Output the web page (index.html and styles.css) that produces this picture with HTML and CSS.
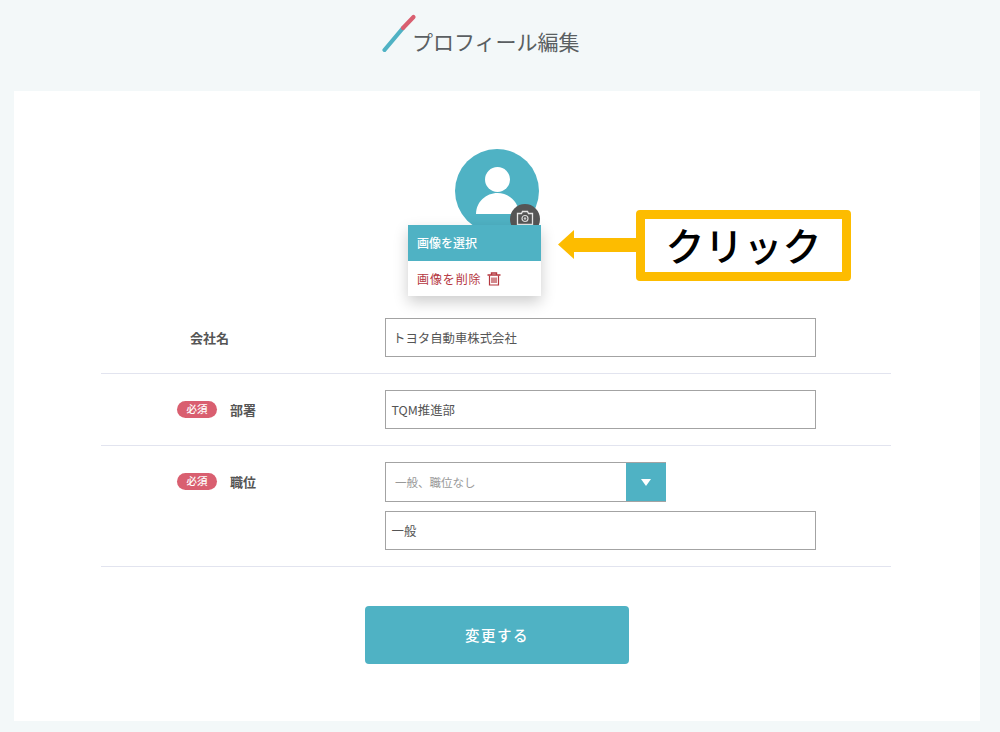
FILE: index.html
```html
<!DOCTYPE html>
<html lang="ja">
<head>
    <meta charset="UTF-8">
    <title>プロフィール編集</title>
    <link rel="stylesheet" href="styles.css">
</head>
<body>

<header class="page-header">
    <svg class="title-pen" width="36" height="38" viewBox="0 0 36 38">
        <path d="M2.500 36 L21 14" stroke="#4fb2c4" stroke-width="4.200" stroke-linecap="round"/>
        <path d="M21 14 L31.500 3" stroke="#d95f70" stroke-width="4.200" stroke-linecap="round"/>
    </svg>
    <h1>プロフィール編集</h1>
</header>

<main class="card">
    <div class="avatar-area">
        <div class="avatar">
            <svg width="84" height="84" viewBox="0 0 84 84">
                <circle cx="42" cy="42" r="42" fill="#4fb2c4"/>
                <circle cx="42.500" cy="30.500" r="12.500" fill="#fff"/>
                <path d="M21 65 C21 53 31 44 42.500 44 C54 44 64 53 64 65 Z" fill="#fff"/>
            </svg>
            <div class="camera">
                <svg width="18" height="16" viewBox="0 0 18 16">
                    <path d="M1.500 3.500 H5.500 L6.500 1.500 H11.500 L12.500 3.500 H16.500 V14.500 H1.500 Z" fill="none" stroke="#e8e8e8" stroke-width="1.300"/>
                    <circle cx="9" cy="8.500" r="3" fill="none" stroke="#ddd" stroke-width="1.200"/>
                    <circle cx="9" cy="8.500" r="1.200" fill="#ccc"/>
                </svg>
            </div>
        </div>

        <div class="photo-menu">
            <div class="menu-select">画像を選択</div>
            <div class="menu-delete">
                画像を削除
                <svg width="14" height="14" viewBox="0 0 14 14">
                    <path d="M0.500 3 H13.500 M4.500 2.500 V1 H9.500 V2.500" fill="none" stroke="#b5373f" stroke-width="1.400"/>
                    <path d="M2.500 3.500 V13 H11.500 V3.500 M5 5.500 V11 M7 5.500 V11 M9 5.500 V11" fill="none" stroke="#b5373f" stroke-width="1.200"/>
                </svg>
            </div>
        </div>

        <!-- Annotation on top of the screenshot -->
        <svg class="callout-arrow" width="80" height="29" viewBox="0 0 80 29">
            <path d="M0 14.500 L16 0 V8 H80 V22 H16 V29 Z" fill="#fdbc00"/>
        </svg>
        <div class="callout-box">クリック</div>
    </div>

    <div class="form">
        <div class="form-row">
            <div class="form-label no-badge">会社名</div>
            <div class="form-fields">
                <div class="field">トヨタ自動車株式会社</div>
            </div>
        </div>
        <div class="form-row">
            <div class="form-label"><span class="badge">必須</span>部署</div>
            <div class="form-fields">
                <div class="field tight">TQM推進部</div>
            </div>
        </div>
        <div class="form-row">
            <div class="form-label"><span class="badge">必須</span>職位</div>
            <div class="form-fields">
                <div class="select-box">
                    <span class="select-value">一般、職位なし</span>
                    <span class="select-btn"></span>
                </div>
                <div class="field tight">一般</div>
            </div>
        </div>
    </div>

    <button class="submit-btn">変更する</button>
</main>

</body>
</html>
```

FILE: styles.css
```css
body {
    font-family: 'Noto Sans CJK JP', 'Noto Sans', sans-serif;
    background-color: #f3f8f9;
    color: #555;
    margin: 0;
    padding: 0;
    height: 732px;
    overflow: hidden;
}

.page-header {
    height: 91px;
    position: relative;
    box-sizing: border-box;
    padding: 26px 0 0 412px;
}

.page-header h1 {
    margin: 0;
    font-size: 21px;
    font-weight: 400;
    line-height: 30px;
    color: #5a5f62;
}

.title-pen {
    position: absolute;
    left: 382px;
    top: 14px;
}

.card {
    margin: 0 20px 0 14px;
    background-color: #fff;
    padding: 58px 0 57px;
    display: flex;
    flex-direction: column;
    align-items: center;
}

.avatar-area {
    position: relative;
    width: 84px;
    height: 84px;
    margin-bottom: 69px;
}

.avatar {
    width: 84px;
    height: 84px;
    position: relative;
}

.avatar svg {
    display: block;
}

.camera {
    position: absolute;
    left: 55px;
    top: 55px;
    width: 30px;
    height: 30px;
    border-radius: 50%;
    background-color: #555;
    display: flex;
    justify-content: center;
    padding-top: 6px;
    box-sizing: border-box;
}

.photo-menu {
    position: absolute;
    left: -47px;
    top: 76px;
    width: 133px;
    background-color: #fff;
    box-shadow: 0 6px 14px rgba(0, 0, 0, 0.2);
    font-size: 12px;
}

.menu-select {
    height: 36px;
    line-height: 36px;
    padding-left: 9px;
    background-color: #4fb2c4;
    color: #fff;
    font-weight: 500;
}

.menu-delete {
    height: 35px;
    padding-left: 9px;
    display: flex;
    align-items: center;
    gap: 5px;
    color: #b5373f;
    letter-spacing: 0.9px;
}

.callout-arrow {
    position: absolute;
    left: 103px;
    top: 81px;
}

.callout-box {
    position: absolute;
    left: 181px;
    top: 61px;
    width: 215px;
    height: 71px;
    box-sizing: border-box;
    border: 9.500px solid #fdbc00;
    border-radius: 4px;
    background-color: #fff;
    color: #000;
    font-size: 39px;
    font-weight: 500;
    line-height: 51px;
    text-align: center;
}

.form {
    width: 790px;
    transform: translateX(-1px);
}

.form-row {
    display: flex;
    padding: 16px 0;
    border-bottom: 1px solid #e2e4ef;
}

.form-label {
    width: 284px;
    box-sizing: border-box;
    padding-left: 76px;
    height: 39px;
    display: flex;
    align-items: center;
    font-size: 13px;
    font-weight: 700;
    color: #555;
}

.form-label.no-badge {
    padding-left: 89px;
}

.badge {
    width: 40px;
    height: 17px;
    line-height: 16px;
    border-radius: 9px;
    margin-right: 13px;
    background-color: #d95f70;
    color: #fff;
    font-size: 10.500px;
    font-weight: 500;
    text-align: center;
}

.form-fields {
    display: flex;
    flex-direction: column;
    gap: 9px;
}

.field {
    width: 431px;
    height: 39px;
    box-sizing: border-box;
    border: 1px solid #a3a3a3;
    padding-left: 7px;
    font-size: 12.400px;
    line-height: 39px;
    color: #555;
}

.field.tight {
    padding-left: 5.500px;
}

.select-box {
    width: 281px;
    height: 40px;
    box-sizing: border-box;
    border: 1px solid #a3a3a3;
    border-right: none;
    display: flex;
    justify-content: space-between;
}

.select-value {
    padding-left: 9px;
    font-size: 11.500px;
    line-height: 38px;
    color: #999;
}

.select-btn {
    width: 40px;
    background-color: #4fb2c4;
    position: relative;
}

.select-btn::after {
    content: "";
    position: absolute;
    left: 15px;
    top: 16px;
    border-left: 5px solid transparent;
    border-right: 5px solid transparent;
    border-top: 7px solid #fff;
}

.submit-btn {
    margin-top: 39px;
    width: 264px;
    height: 58px;
    padding: 0 0 2px;
    border: none;
    border-radius: 4px;
    background-color: #4fb2c4;
    color: #fff;
    font-family: inherit;
    font-size: 14.500px;
    font-weight: 500;
    letter-spacing: 1.500px;
    cursor: pointer;
}
```
